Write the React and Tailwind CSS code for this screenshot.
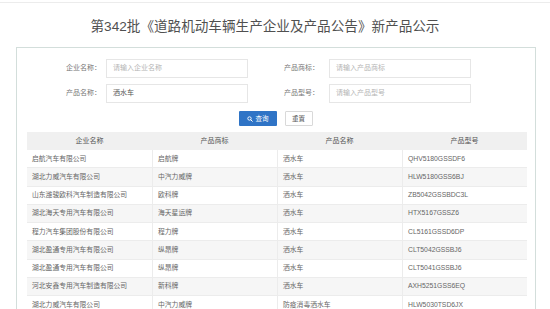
import React from 'react'

const rows = [
  ['启航汽车有限公司', '启航牌', '洒水车', 'QHV5180GSSDF6'],
  ['湖北力威汽车有限公司', '中汽力威牌', '洒水车', 'HLW5180GSS6BJ'],
  ['山东潍骏欧科汽车制造有限公司', '欧科牌', '洒水车', 'ZB5042GSSBDC3L'],
  ['湖北海天专用汽车有限公司', '海天星运牌', '洒水车', 'HTX5167GSSZ6'],
  ['程力汽车集团股份有限公司', '程力牌', '洒水车', 'CL5161GSSD6DP'],
  ['湖北盈通专用汽车有限公司', '纵昂牌', '洒水车', 'CLT5042GSSBJ6'],
  ['湖北盈通专用汽车有限公司', '纵昂牌', '洒水车', 'CLT5041GSSBJ6'],
  ['河北安鑫专用汽车制造有限公司', '新科牌', '洒水车', 'AXH5251GSS6EQ'],
  ['湖北力威汽车有限公司', '中汽力威牌', '防疫消毒洒水车', 'HLW5030TSD6JX'],
]

const font = { fontFamily: '"Liberation Sans", "Noto Sans CJK SC", sans-serif' }

const Field = ({ label, value, placeholder, labelW, gap }) => (
  <>
    <div className={`${labelW} text-right text-[7px] text-[#777]`}>{label}</div>
    <div className={`${gap} w-[142px] h-[19px] border border-[#e6e6e6] bg-white flex items-center pl-[6px] text-[7px]`}>
      {value ? <span className='text-[#555]'>{value}</span> : <span className='text-[#b5b5b5]'>{placeholder}</span>}
    </div>
  </>
)

const App = () => {
  return (
    <div style={font} className='w-[550px] h-[309px] overflow-hidden bg-white relative'>
      <div className='h-[3px] border-b border-[#ececec]'></div>
      <div className='h-[44px] flex items-center justify-center pr-[20px] pt-[4px] text-[13.6px] text-[#505050]'>
        第342批《道路机动车辆生产企业及产品公告》新产品公示
      </div>
      <div className='ml-[16px] w-[520px] h-[300px] border border-[#d3dedb] pt-[11px] pl-[10px] pr-[7px]'>
        <div className='flex items-center -ml-[10px]'>
          <Field label='企业名称：' placeholder='请输入企业名称' labelW='w-[84px]' gap='ml-[5px]' />
          <Field label='产品商标：' placeholder='请输入产品商标' labelW='w-[71px]' gap='ml-[10px]' />
        </div>
        <div className='flex items-center -ml-[10px] mt-[6px]'>
          <Field label='产品名称：' value='洒水车' labelW='w-[84px]' gap='ml-[5px]' />
          <Field label='产品型号：' placeholder='请输入产品型号' labelW='w-[71px]' gap='ml-[10px]' />
        </div>
        <div className='flex justify-center gap-[8px] mt-[8px] -ml-[4px]'>
          <button className='w-[38px] h-[15px] bg-[#2f74c6] rounded-[1px] flex items-center justify-center gap-[3px] text-white text-[6.5px]'>
            <svg width='6' height='6' viewBox='0 0 12 12'>
              <circle cx='5' cy='5' r='3.4' fill='none' stroke='white' strokeWidth='1.8' />
              <path d='M7.6 7.6 L10.6 10.6' stroke='white' strokeWidth='2' strokeLinecap='round' />
            </svg>
            查询
          </button>
          <button className='w-[28px] h-[15px] bg-white border border-[#d9d9d9] rounded-[1px] text-[#555] text-[6.5px]'>重置</button>
        </div>
        <div className='mt-[6px] w-[500px]'>
          <div className='grid grid-cols-4 h-[18px] bg-[#f0f0f0] text-[7px] text-[#555]'>
            <div className='flex items-center justify-center'>企业名称</div>
            <div className='flex items-center justify-center'>产品商标</div>
            <div className='flex items-center justify-center'>产品名称</div>
            <div className='flex items-center justify-center'>产品型号</div>
          </div>
          {rows.map((r, i) => (
            <div key={i} className={`grid grid-cols-4 h-[18.25px] border-b border-[#ececec] text-[6.8px] text-[#666] ${i % 2 ? 'bg-[#f6f6f6]' : 'bg-white'}`}>
              {r.map((c, j) => (
                <div key={j} className={`flex items-center pl-[5px] ${j > 0 ? 'border-l border-[#ececec]' : ''}`}>{c}</div>
              ))}
            </div>
          ))}
        </div>
      </div>
    </div>
  )
}

export default App
